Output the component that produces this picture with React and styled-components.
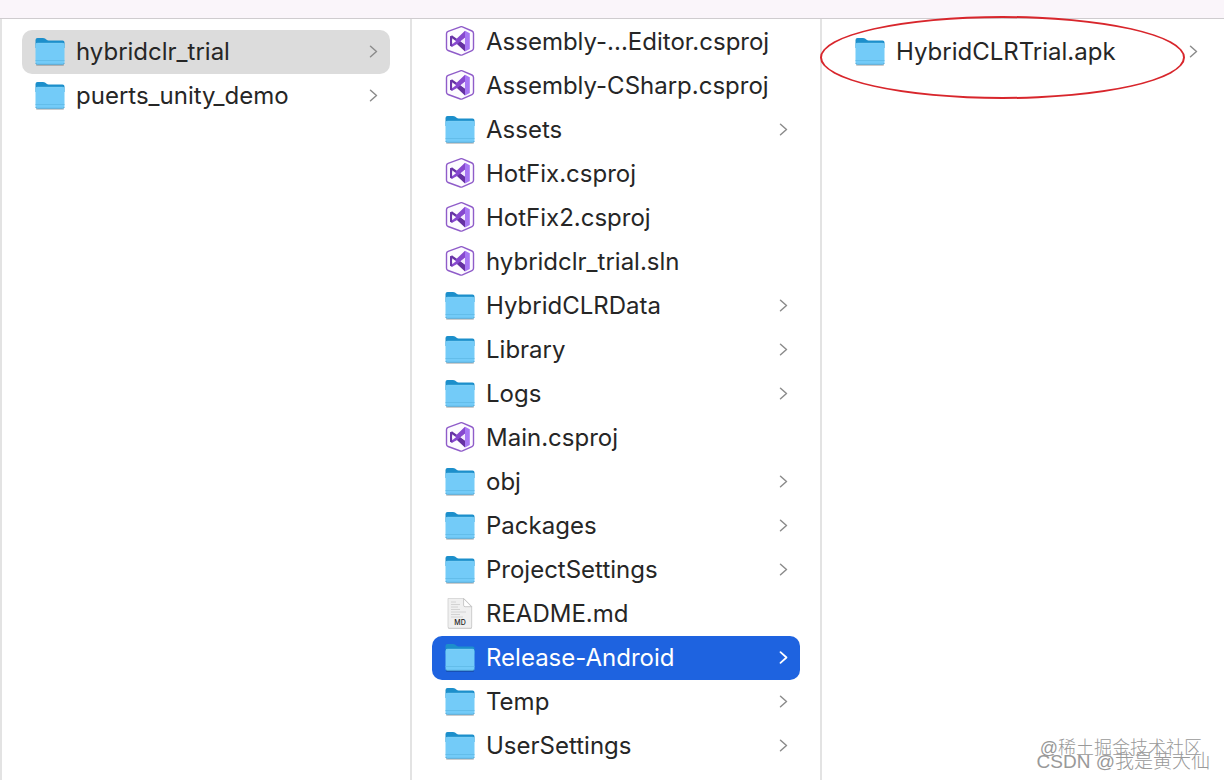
import React from "react";
import styled, { createGlobalStyle } from "styled-components";

const GlobalStyle = createGlobalStyle`
  *, *::before, *::after { box-sizing: border-box; }
  body {
    margin: 0;
    background: #ffffff;
    font-family: Inter, "Noto Sans CJK SC", sans-serif;
    color: #262626;
  }
`;

const Finder = styled.main`
  position: relative;
  display: flex;
  flex-direction: column;
  min-height: 100vh;
  overflow: hidden;
`;

const Toolbar = styled.header`
  height: 19px;
  background: #faf5fa;
  border-bottom: 1px solid #cfcccf;
`;

const Columns = styled.div`
  flex: 1;
  display: flex;
`;

const Column = styled.ul`
  flex: 1 0 410px;
  position: relative;
  margin: 0;
  padding: ${(p) => (p.$scrolled ? 1 : 11)}px 20px 0;
  list-style: none;
  border-left: 2px solid #e3e3e3;
`;

const backgrounds = { active: "#1e63e0", path: "#dcdcdc" };

const Row = styled.button`
  display: flex;
  align-items: center;
  gap: 10px;
  width: 100%;
  height: 44px;
  padding: 0 10px 0 12px;
  border: 0;
  border-radius: 10px;
  background: ${(p) => backgrounds[p.$state] || "transparent"};
  color: ${(p) => (p.$state === "active" ? "#ffffff" : "inherit")};
  font: inherit;
  font-size: 24px;
  line-height: 32px;
  text-align: left;
`;

const Name = styled.span`
  flex: 1;
  white-space: nowrap;
`;

const Icon = styled.svg`
  flex: none;
  width: 32px;
  height: 32px;
`;

const Arrow = styled.svg`
  flex: none;
  width: 14px;
  height: 16px;
  fill: none;
  stroke: ${(p) => (p.$light ? "#ffffff" : "#8c8c8c")};
  stroke-width: ${(p) => (p.$light ? 1.8 : 1.5)};
  stroke-linecap: round;
  stroke-linejoin: round;
`;

const Highlight = styled.li`
  position: absolute;
  top: -3px;
  left: -2px;
  width: 365px;
  height: 83px;
  border: 2px solid #d8262c;
  border-radius: 50%;
  pointer-events: none;
`;

const Watermarks = styled.div`
  position: absolute;
  right: 14px;
  bottom: 12px;
  display: flex;
  flex-direction: column;
  align-items: flex-end;
  color: #999999;
  font-family: "Liberation Sans", "Noto Sans CJK SC", sans-serif;
  font-weight: 300;
  line-height: 13px;
  white-space: nowrap;
  pointer-events: none;
`;

const CommunityMark = styled.span`
  padding-right: 8px;
  font-size: 18px;
`;

const AuthorMark = styled.span`
  font-size: 19px;
`;

function FolderIcon() {
  return (
    <Icon viewBox="0 0 32 32" aria-hidden="true">
      <path d="M2 28h28v1a1 1 0 0 1-1 1H3a1 1 0 0 1-1-1z" fill="#000000" opacity=".2" />
      <path d="M1.5 4Q1.5 2 3.5 2H9q1.2 0 2 .6l1.6 1.2q.8.6 2 .6h13.9q2 0 2 2V12h-29z" fill="#1c8fcb" />
      <path d="M1.5 9Q1.5 7.2 3.3 7.2h25.4q1.8 0 1.8 1.8V26.5q0 2-2 2h-25q-2 0-2-2z" fill="#73cbf8" />
      <path d="M2 8Q2.4 7.3 3.4 7.3h25.2q1 0 1.4.7" fill="none" stroke="#8ad8fc" strokeWidth=".8" />
      <path d="M1.5 24.5h29" stroke="#5fb9e6" strokeWidth=".8" />
      <path d="M1.6 27q.2 1.3 1.9 1.3h25q1.7 0 1.900-1.3" fill="none" stroke="#4ba5d3" strokeWidth=".8" />
    </Icon>
  );
}

function VisualStudioIcon() {
  return (
    <Icon viewBox="0 0 32 32" aria-hidden="true">
      <path
        d="M18.4.9 28 5q1.5.7 1.5 2.4v14.8q0 1.7-1.5 2.4l-9.6 4.3q-1 .4-2 .1L4.1 24.500q-1.6-.6-1.6-2.3V7.7q0-1.7 1.6-2.3L16.4.8q1-.3 2 .1z"
        fill="#fdfbff"
        stroke="#8f5cc9"
        strokeWidth="1.4"
      />
      <path d="M6 10.6 8.2 9.6 21 18.6V25.500L12.600 17.700 6 12z" fill="#6531a2" />
      <path d="M6 19.800 8.200 20.800 14 17.600 21 11.800V4.800L12.600 12.700 6 18.400z" fill="#8748cf" />
      <path d="M6 10.600 8.200 9.600V20.800L6 19.800z" fill="#6b35ab" />
      <path d="M8.200 12.200V18.200L12 15.200z" fill="#fdfbff" />
      <path d="M21 11.800v6.800l-4.400-3.400z" fill="#f1e8fd" />
      <path d="M21 4.800 25.800 7.200v15.900L21 25.500z" fill="#a776f4" />
    </Icon>
  );
}

function MarkdownIcon() {
  return (
    <Icon viewBox="0 0 32 32" aria-hidden="true">
      <path d="M4 9h24v20.300q0 1.500-1.400 1.500H5.400Q4 30.800 4 29.300z" fill="#bdbdbd" />
      <path d="M4 .4h15.800l7.900 8v20.400q0 1.400-1.400 1.400H5.200q-1.200 0-1.200-1.400z" fill="#f0f0f0" stroke="#c8c8c8" strokeWidth=".7" />
      <path d="M19.600.6v6.600q0 1.500 1.500 1.500h6.400z" fill="#ffffff" stroke="#b5b5b5" strokeWidth=".7" />
      <path d="M7 4h5M7 6.500h9M7 9h7M7 11.500h9M7 14h15M7 16.500h9M7 19h12" stroke="#cfcfcf" strokeWidth=".9" />
      <text x="16" y="27" textAnchor="middle" fontSize="7" fontWeight="500" fill="#222222">MD</text>
    </Icon>
  );
}

const icons = { folder: FolderIcon, vs: VisualStudioIcon, md: MarkdownIcon };

function Entry({ name, kind = "folder", state }) {
  const Glyph = icons[kind];
  return (
    <li>
      <Row type="button" $state={state}>
        <Glyph />
        <Name>{name}</Name>
        {kind === "folder" && (
          <Arrow viewBox="0 0 14 16" $light={state === "active"} aria-hidden="true">
            <path d="M4.5 2.2 10.5 7.5 4.5 12.8" />
          </Arrow>
        )}
      </Row>
    </li>
  );
}

const projects = [
  { name: "hybridclr_trial", state: "path" },
  { name: "puerts_unity_demo" },
];

const files = [
  { name: "Assembly-...Editor.csproj", kind: "vs" },
  { name: "Assembly-CSharp.csproj", kind: "vs" },
  { name: "Assets" },
  { name: "HotFix.csproj", kind: "vs" },
  { name: "HotFix2.csproj", kind: "vs" },
  { name: "hybridclr_trial.sln", kind: "vs" },
  { name: "HybridCLRData" },
  { name: "Library" },
  { name: "Logs" },
  { name: "Main.csproj", kind: "vs" },
  { name: "obj" },
  { name: "Packages" },
  { name: "ProjectSettings" },
  { name: "README.md", kind: "md" },
  { name: "Release-Android", state: "active" },
  { name: "Temp" },
  { name: "UserSettings" },
];

export default function App() {
  return (
    <>
      <GlobalStyle />
      <Finder>
        <Toolbar />
        <Columns>
          <Column>
            {projects.map((item) => <Entry key={item.name} {...item} />)}
          </Column>
          <Column $scrolled>
            {files.map((item) => <Entry key={item.name} {...item} />)}
          </Column>
          <Column>
            <Entry name="HybridCLRTrial.apk" />
            <Highlight aria-hidden="true" />
          </Column>
        </Columns>
        <Watermarks>
          <CommunityMark>@稀土掘金技术社区</CommunityMark>
          <AuthorMark>CSDN @我是黄大仙</AuthorMark>
        </Watermarks>
      </Finder>
    </>
  );
}
